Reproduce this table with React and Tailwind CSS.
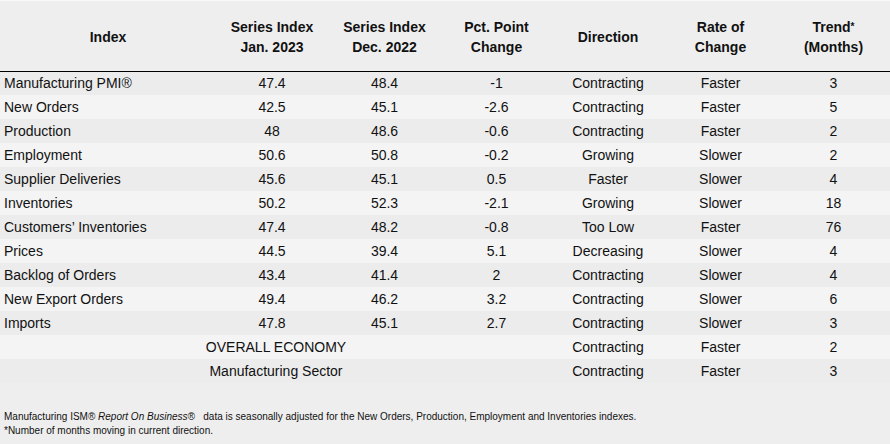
import React from 'react';

const filas = [
  ['Manufacturing PMI®', '47.4', '48.4', '-1', 'Contracting', 'Faster', '3'],
  ['New Orders', '42.5', '45.1', '-2.6', 'Contracting', 'Faster', '5'],
  ['Production', '48', '48.6', '-0.6', 'Contracting', 'Faster', '2'],
  ['Employment', '50.6', '50.8', '-0.2', 'Growing', 'Slower', '2'],
  ['Supplier Deliveries', '45.6', '45.1', '0.5', 'Faster', 'Slower', '4'],
  ['Inventories', '50.2', '52.3', '-2.1', 'Growing', 'Slower', '18'],
  ['Customers’ Inventories', '47.4', '48.2', '-0.8', 'Too Low', 'Faster', '76'],
  ['Prices', '44.5', '39.4', '5.1', 'Decreasing', 'Slower', '4'],
  ['Backlog of Orders', '43.4', '41.4', '2', 'Contracting', 'Slower', '4'],
  ['New Export Orders', '49.4', '46.2', '3.2', 'Contracting', 'Slower', '6'],
  ['Imports', '47.8', '45.1', '2.7', 'Contracting', 'Slower', '3']
];

const resumen = [
  ['OVERALL ECONOMY', 'Contracting', 'Faster', '2'],
  ['Manufacturing Sector', 'Contracting', 'Faster', '3']
];

const fondo = (i) => (i % 2 === 0 ? 'bg-[#ececec]' : 'bg-[#f4f4f4]');

const App = () => {
  return (
    <div className="w-[890px] h-[444px] bg-[#eeeeee] text-[#111] font-['Liberation_Sans',Arial,sans-serif] border-t border-[#f8f8f8]">
      <table className="w-full border-collapse table-fixed text-[14px]">
        <colgroup>
          <col className="w-[216px]" />
          <col className="w-[112px]" />
          <col className="w-[113px]" />
          <col className="w-[111px]" />
          <col className="w-[112px]" />
          <col className="w-[113px]" />
          <col />
        </colgroup>
        <thead>
          <tr className="h-[70px] border-b border-black font-bold leading-[20px]">
            <th className="text-center pt-[2px]">Index</th>
            <th className="text-center pt-[2px]">Series Index<br />Jan. 2023</th>
            <th className="text-center pt-[2px]">Series Index<br />Dec. 2022</th>
            <th className="text-center pt-[2px]">Pct. Point<br />Change</th>
            <th className="text-center pt-[2px]">Direction</th>
            <th className="text-center pt-[2px]">Rate of<br />Change</th>
            <th className="text-center pt-[2px]">Trend<span className="text-[10px] align-top">*</span><br />(Months)</th>
          </tr>
        </thead>
        <tbody>
          {filas.map((f, i) => (
            <tr key={f[0]} className={`h-[24px] ${fondo(i)}`}>
              <td className="pl-[4px] pt-[1px] text-left">{f[0]}</td>
              {f.slice(1).map((v, j) => (
                <td key={j} className="pt-[1px] text-center">{v}</td>
              ))}
            </tr>
          ))}
          {resumen.map((r, i) => (
            <tr key={r[0]} className={`h-[24px] ${fondo(filas.length + i)}`}>
              <td colSpan={4} className="pt-[1px] text-center">{r[0]}</td>
              <td className="pt-[1px] text-center">{r[1]}</td>
              <td className="pt-[1px] text-center">{r[2]}</td>
              <td className="pt-[1px] text-center">{r[3]}</td>
            </tr>
          ))}
        </tbody>
      </table>
      <div className="pl-[4px] pt-[27px] text-[10px] leading-[14px]">
        <p>
          Manufacturing ISM® <i>Report On Business®</i>&nbsp;&nbsp; data is seasonally adjusted for the New Orders, Production, Employment and Inventories indexes.
        </p>
        <p>*Number of months moving in current direction.</p>
      </div>
    </div>
  );
};

export default App;
